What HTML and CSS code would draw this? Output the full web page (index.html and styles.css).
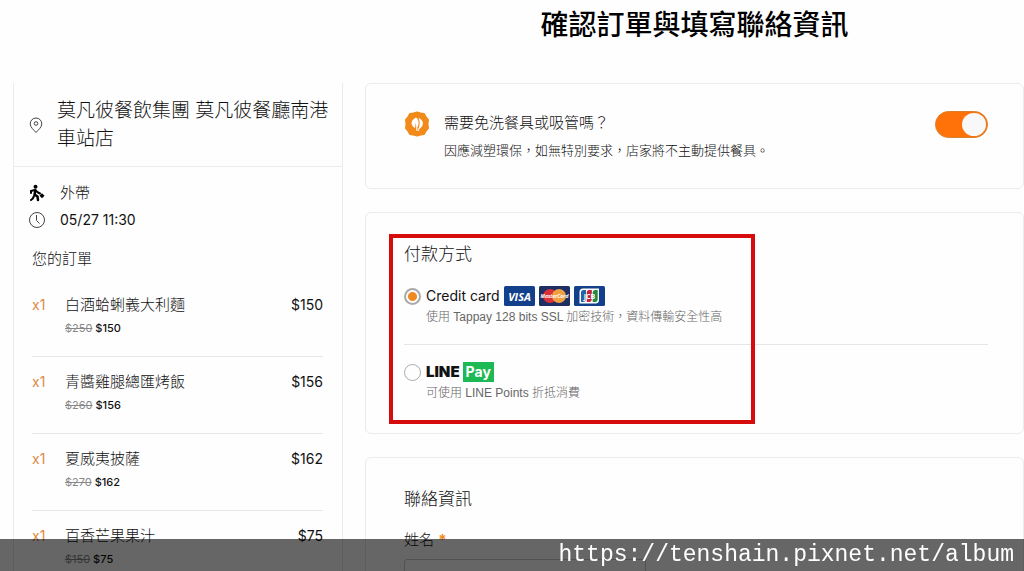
FILE: index.html
```
<!DOCTYPE html>
<html lang="zh-Hant">
<head>
    <meta charset="UTF-8">
    <meta name="viewport" content="width=device-width, initial-scale=1.0">
    <title>確認訂單與填寫聯絡資訊</title>
    <link rel="stylesheet" href="styles.css">
</head>
<body>
    <div class="page">
        <aside class="summary">
            <div class="store">
                <svg class="pin" viewBox="0 0 14 17" fill="none" stroke="#444">
                    <path d="M7 15.5 C5 13 1.2 10.500 1.200 6.800 A5.800 5.800 0 0 1 12.800 6.800 C12.800 10.500 9 13 7 15.500 Z"/>
                    <circle cx="7" cy="6.500" r="1.800"/>
                </svg>
                <h2>莫凡彼餐飲集團 莫凡彼餐廳南港車站店</h2>
            </div>
            <div class="details">
                <div class="detail">
                    <svg viewBox="0 0 18 18" fill="none" stroke="#000" stroke-width="2" stroke-linecap="round" stroke-linejoin="round">
                        <circle cx="7.500" cy="2.700" r="2" fill="#000" stroke="none"/>
                        <path d="M3 9 V7 L7 6 L10 8.500 L12 9.500"/>
                        <path d="M7.500 6.500 L6.500 10.500 L9.500 12.500 L10 16" stroke-width="2.500"/>
                        <path d="M6 12 L4.800 14.500 L3 16"/>
                        <path d="M14 9.200 L16.500 11.700 L14 14.200 L11.500 11.700 Z" fill="#000" stroke="none"/>
                    </svg>
                    <span>外帶</span>
                </div>
                <div class="detail">
                    <svg viewBox="0 0 18 18" fill="none" stroke="#444">
                        <circle cx="9" cy="9" r="7.500"/>
                        <path d="M8.500 4 V9.500 L11.500 12.500"/>
                    </svg>
                    <span class="time">05/27 11:30</span>
                </div>
                <h3>您的訂單</h3>
                <ul class="items">
                    <li>
                        <span class="qty">x1</span>
                        <div class="item">白酒蛤蜊義大利麵<p><del>$250</del> $150</p></div>
                        <span>$150</span>
                    </li>
                    <li>
                        <span class="qty">x1</span>
                        <div class="item">青醬雞腿總匯烤飯<p><del>$260</del> $156</p></div>
                        <span>$156</span>
                    </li>
                    <li>
                        <span class="qty">x1</span>
                        <div class="item">夏威夷披薩<p><del>$270</del> $162</p></div>
                        <span>$162</span>
                    </li>
                    <li>
                        <span class="qty">x1</span>
                        <div class="item">百香芒果果汁<p><del>$150</del> $75</p></div>
                        <span>$75</span>
                    </li>
                </ul>
            </div>
        </aside>

        <main>
            <h1>確認訂單與填寫聯絡資訊</h1>
            <form class="cards">
                <section class="card cutlery">
                    <svg class="badge" viewBox="0 0 26 26">
                        <path fill="#f28a1a" stroke="#f28a1a" stroke-width="2" stroke-linejoin="round" d="M13 1.500 L16.500 2.500 L20 3 L21.500 6 L24 9 L23.500 13 L24 17 L21.500 20 L20 23 L16.500 23.500 L13 24.500 L9.500 23.500 L6 23 L4.500 20 L2 17 L2.500 13 L2 9 L4.500 6 L6 3 L9.500 2.500 Z"/>
                        <path fill="#fff" d="M12.500 20 C11.800 17 12.800 15 11.500 11.500 C11.500 14 11.500 16 11 17 C6.500 14.500 6 9.500 12 6.500 C15.500 9 15 14 13.300 16.500 C13.500 18 13.500 19 13.500 20 Z"/>
                        <path fill="#fff" d="M14.500 7 C19 8.500 21 13.500 16 17.500 C15 18.300 14.800 19 14.800 20 L14 20 C14 17 17.500 13 14.500 7 Z"/>
                    </svg>
                    <label for="cutlery">需要免洗餐具或吸管嗎？<small>因應減塑環保，如無特別要求，店家將不主動提供餐具。</small></label>
                    <input type="checkbox" class="switch" id="cutlery" checked>
                </section>

                <section class="card payment">
                    <h2>付款方式</h2>
                    <div class="option">
                        <input type="radio" name="payment" id="credit" checked>
                        <label for="credit">
                            <span class="name">Credit card
                                <svg class="brand" viewBox="0 0 31 20">
                                    <rect width="31" height="20" rx="1.500" fill="#12408b"/>
                                    <text class="visa" x="15.500" y="14.500" text-anchor="middle">VISA</text>
                                </svg>
                                <svg class="brand" viewBox="0 0 31 20">
                                    <rect width="31" height="20" rx="1.500" fill="#1d2f63"/>
                                    <circle cx="11" cy="10" r="7" fill="#d9313a"/>
                                    <circle cx="20" cy="10" r="7" fill="#f0a040"/>
                                    <text class="master" x="15.500" y="12" text-anchor="middle">MasterCard</text>
                                </svg>
                                <svg class="brand" viewBox="0 0 31 20">
                                    <rect width="31" height="20" rx="1.500" fill="#12408b"/>
                                    <path fill="#fff" d="M9 2.500 H25 V14 A3.500 3.500 0 0 1 21.500 17.500 H5.500 V6 A3.500 3.500 0 0 1 9 2.500 Z"/>
                                    <path fill="#2164a8" d="M9.500 4 H12 V13 Q12 16 9 16 H7 V6.500 Q7 4 9.500 4 Z"/>
                                    <path fill="#c4223c" d="M15 4 H17.800 V13 Q17.800 16 15 16 H12.800 V6.500 Q12.800 4 15 4 Z"/>
                                    <path fill="#20883f" d="M21 4 H23.700 V13 Q23.700 16 21 16 H18.700 V6.500 Q18.700 4 21 4 Z"/>
                                    <text class="jcb" x="15.500" y="12.500" text-anchor="middle">JCB</text>
                                </svg>
                            </span>
                            <small>使用 Tappay 128 bits SSL 加密技術，資料傳輸安全性高</small>
                        </label>
                    </div>
                    <div class="option">
                        <input type="radio" name="payment" id="linepay">
                        <label for="linepay">
                            <span class="name line">LINE <b>Pay</b></span>
                            <small>可使用 LINE Points 折抵消費</small>
                        </label>
                    </div>
                    <div class="highlight"></div>
                </section>

                <section class="card contact">
                    <h2>聯絡資訊</h2>
                    <label for="name">姓名 <em>*</em></label>
                    <input type="text" id="name">
                </section>
            </form>
        </main>
    </div>
    <div class="watermark">https://tenshain.pixnet.net/album</div>
</body>
</html>
```
FILE: styles.css
```
* {
    margin: 0;
    padding: 0;
    box-sizing: border-box;
}
body {
    background: #fefefe;
    color: #111;
    font-family: Inter, "Noto Sans CJK TC", sans-serif;
    font-size: 15px;
    font-weight: 300;
    line-height: 24px;
    height: 100vh;
    overflow: hidden;
}
.page {
    display: grid;
    grid-template-columns: 330px 1fr;
    gap: 22px;
    padding-left: 13px;
}
h1 {
    font-size: 28px;
    font-weight: 500;
    line-height: 50px;
    text-align: center;
    margin-bottom: 33px;
    color: #000;
}
h2 {
    font-size: 17px;
    font-weight: 300;
}
h3 {
    font-size: 15px;
    font-weight: 300;
}
small {
    display: block;
    font-family: "Liberation Sans", "Noto Sans CJK TC", sans-serif;
    font-size: 12px;
    line-height: 18px;
}

/* 左側訂單 */
.summary {
    margin-top: 83px;
    border: 1px solid #ebebeb;
    border-top: none;
}
.store {
    display: flex;
    align-items: center;
    gap: 14px;
    padding: 14px 10px 13px 15px;
    border-bottom: 1px solid #ebebeb;
}
.store h2 {
    font-size: 19px;
    line-height: 28px;
}
.pin {
    flex: none;
    width: 14px;
    height: 17px;
}
.details {
    padding: 12px 19px 12px 18px;
}
.detail {
    display: flex;
    align-items: center;
    gap: 14px;
    height: 27px;
    margin-left: -4px;
}
.detail svg {
    width: 18px;
    height: 18px;
}
.time {
    font-size: 14px;
    font-weight: 400;
}
.details h3 {
    margin: 14px 0 9px;
}
.items {
    list-style: none;
}
.items li {
    display: flex;
    padding: 13px 0 16px;
    border-bottom: 1px solid #e6e6e6;
    font-size: 14px;
    font-weight: 400;
}
.qty {
    width: 33px;
    color: #dd8c48;
}
.item {
    flex: 1;
    font-size: 15px;
    font-weight: 300;
}
.item p {
    font-size: 11px;
    font-weight: 500;
    line-height: 23px;
}
.item del {
    color: #888;
    font-weight: 400;
}

/* 右側卡片 */
.cards {
    display: grid;
    gap: 23px;
}
.card {
    position: relative;
    padding: 29px 35px 31px 38px;
    border: 1px solid #ebebeb;
    border-radius: 6px;
}
.cutlery {
    display: flex;
    align-items: flex-start;
    gap: 14px;
    padding-top: 27px;
    padding-bottom: 25px;
}
.cutlery label {
    flex: 1;
}
.cutlery small {
    margin-top: 4px;
    font-size: 13px;
    line-height: 24px;
}
.badge {
    width: 26px;
    height: 26px;
}
.switch {
    appearance: none;
    width: 53px;
    height: 27px;
    padding: 1px;
    border: 1px solid #d9802e;
    border-radius: 14px;
    background: #ff7209;
}
.switch::before {
    content: "";
    display: block;
    width: 24px;
    height: 23px;
    margin-left: auto;
    border-radius: 50%;
    background: #f8f8f8;
}
.option {
    display: flex;
    gap: 5px;
    padding: 18px 0;
}
.option + .option {
    border-top: 1px solid #e6e6e6;
    padding: 15px 0 0;
}
.option input {
    appearance: none;
    width: 17px;
    height: 17px;
    margin: 4px 0 0;
    border: 1px solid #aaa;
    border-radius: 50%;
}
.option input:checked {
    border-width: 2px;
    background: radial-gradient(#ef8a22 4px, transparent 5px);
}
.option small {
    color: #666;
}
.name {
    display: flex;
    align-items: center;
    gap: 4px;
    font-size: 14px;
    font-weight: 400;
}
.brand {
    width: 31px;
    height: 20px;
}
.visa {
    font: italic 700 11px "Open Sans", sans-serif;
    fill: #fff;
}
.master {
    font: italic 700 5px "Open Sans", sans-serif;
    fill: #fff;
}
.jcb {
    font: 700 7px "Open Sans", sans-serif;
    fill: #fff;
}
.line {
    gap: 3px;
    font-size: 15px;
    font-weight: 900;
}
.line b {
    padding: 0 3px;
    background: #1db954;
    color: #fff;
    font-size: 14px;
    font-weight: 700;
    line-height: 20px;
}
.highlight {
    position: absolute;
    top: 21px;
    left: 23px;
    width: 366px;
    height: 190px;
    border: 4px solid #d60c0c;
    pointer-events: none;
}
.contact label {
    display: block;
    margin: 17px 0 7px;
}
.contact em {
    color: #ef8a22;
    font-style: normal;
    font-weight: 700;
}
.contact input {
    width: 242px;
    height: 40px;
    border: 1px solid #ccc;
    border-radius: 3px;
    background: #fefefe;
}

.watermark {
    position: fixed;
    left: 0;
    right: 0;
    bottom: 0;
    padding: 0 10px;
    background: rgba(0, 0, 0, 0.6);
    color: #fff;
    font-family: "Liberation Mono", monospace;
    font-size: 23px;
    line-height: 32px;
    text-align: right;
}
```
